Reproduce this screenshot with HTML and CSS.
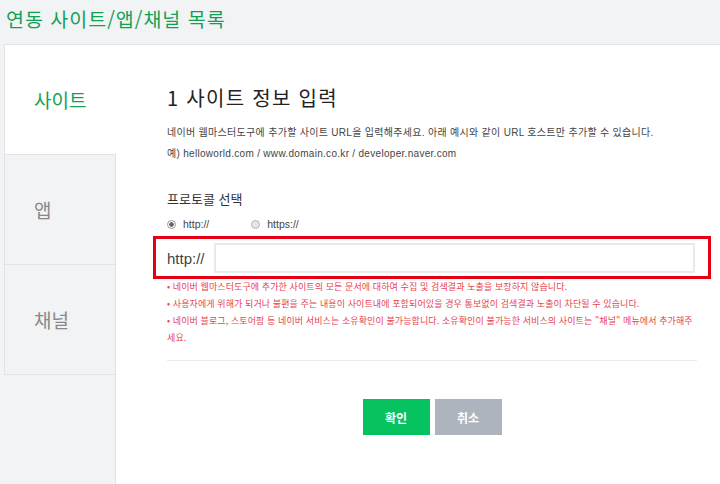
FILE: index.html
```html
<!DOCTYPE html>
<html lang="ko">
<head>
    <meta charset="UTF-8">
    <meta name="viewport" content="width=device-width, initial-scale=1.0">
    <title>연동 사이트/앱/채널 목록</title>
    <link rel="stylesheet" href="styles.css">
</head>
<body>

<h1 class="page-title">연동 사이트/앱/채널 목록</h1>

<div class="panel">
    <!-- 왼쪽 탭 -->
    <ul class="tabs">
        <li class="tab active">사이트</li>
        <li class="tab">앱</li>
        <li class="tab last">채널</li>
        <li class="tab-fill"></li>
    </ul>

    <div class="content">
        <h2>1 사이트 정보 입력</h2>
        <p class="desc">
            네이버 웹마스터도구에 추가할 사이트 URL을 입력해주세요. 아래 예시와 같이 URL 호스트만 추가할 수 있습니다.<br>
            예) helloworld.com / www.domain.co.kr / developer.naver.com
        </p>

        <h3>프로토콜 선택</h3>
        <div class="radios">
            <label><input type="radio" name="protocol" value="http" checked> http://</label>
            <label><input type="radio" name="protocol" value="https"> https://</label>
        </div>

        <!-- 입력 영역 -->
        <div class="url-box">
            <span class="prefix">http://</span>
            <input type="text" id="url" class="url-input">
        </div>

        <ul class="notes">
            <li>• 네이버 웹마스터도구에 추가한 사이트의 모든 문서에 대하여 수집 및 검색결과 노출을 보장하지 않습니다.</li>
            <li>• 사용자에게 위해가 되거나 불편을 주는 내용이 사이트내에 포함되어있을 경우 통보없이 검색결과 노출이 차단될 수 있습니다.</li>
            <li>• 네이버 블로그, 스토어팜 등 네이버 서비스는 소유확인이 불가능합니다. 소유확인이 불가능한 서비스의 사이트는 "채널" 메뉴에서 추가해주세요.</li>
        </ul>

        <div class="buttons">
            <button type="button" class="btn ok">확인</button>
            <button type="button" class="btn cancel">취소</button>
        </div>
    </div>
</div>

</body>
</html>
```

FILE: styles.css
```css
body {
    font-family: 'Liberation Sans', 'Noto Sans CJK KR', sans-serif;
    background-color: #f2f3f5;
    color: #333;
    margin: 0;
    padding: 0;
    overflow: hidden;
}
.page-title {
    margin: 0;
    height: 44px;
    padding-left: 6px;
    line-height: 37px;
    font-family: 'Noto Sans CJK KR', sans-serif;
    font-size: 19.5px;
    font-weight: 400;
    letter-spacing: 1px;
    color: #11a153;
}
.panel {
    display: flex;
    margin-left: 4px;
    border-top: 1px solid #e1e3e6;
    height: 440px;
}
.tabs {
    list-style: none;
    margin: 0;
    padding: 0;
    width: 112px;
    display: flex;
    flex-direction: column;
}
.tab {
    height: 109px;
    padding-left: 29px;
    display: flex;
    align-items: center;
    font-family: 'Noto Sans CJK KR', sans-serif;
    font-size: 19px;
    color: #888;
    background-color: #f2f3f5;
    border-left: 1px solid #e1e3e6;
    border-right: 1px solid #e1e3e6;
    border-top: 1px solid #e1e3e6;
}
.tab.active {
    color: #11a153;
    background-color: #fff;
    border-top: none;
    border-right: none;
    height: 109px;
}
.tab.last {
    border-bottom: 1px solid #e1e3e6;
}
.tab-fill {
    flex: 1;
    border-right: 1px solid #e1e3e6;
}
.content {
    flex: 1;
    background-color: #fff;
    padding: 39px 23px 0 51px;
}
h2 {
    margin: 0;
    font-family: 'Noto Sans CJK KR', sans-serif;
    font-size: 20px;
    font-weight: 400;
    line-height: 28px;
    letter-spacing: 1.3px;
    color: #222;
}
.desc {
    margin: 10px 0 0;
    font-size: 10px;
    line-height: 21px;
    letter-spacing: 0.3px;
    color: #444;
}
h3 {
    margin: 25px 0 0;
    font-family: 'Noto Sans CJK KR', sans-serif;
    font-size: 13px;
    font-weight: 400;
    line-height: 20px;
    color: #333;
}
.radios {
    margin-top: 7px;
    display: flex;
    font-size: 10.5px;
    line-height: 16px;
    color: #444;
}
.radios label {
    display: flex;
    align-items: center;
    margin-right: 42px;
}
.radios input {
    appearance: none;
    width: 9px;
    height: 9px;
    margin: 0 7px 0 0;
    border: 1px solid #b5b5b5;
    border-radius: 50%;
    background-color: #e6e6e6;
}
.radios input:checked {
    background: radial-gradient(circle, #666 0, #666 2px, #fff 2.5px);
    border-color: #999;
}
.url-box {
    display: flex;
    align-items: center;
    margin: 4px -14px 0;
    padding: 4px 13px 3px 11px;
    border: 3px solid #e60012;
}
.prefix {
    width: 47px;
    font-size: 15px;
    color: #444;
}
.url-input {
    flex: 1;
    height: 30px;
    box-sizing: border-box;
    border: 2px solid #e9eaec;
    padding: 0 8px;
    font-size: 13px;
    outline: none;
}
.notes {
    list-style: none;
    margin: -1px 0 0;
    padding: 0 0 14px;
    font-family: 'Noto Sans CJK KR', sans-serif;
    font-size: 9px;
    line-height: 17px;
    letter-spacing: 0.1px;
    color: #e8434f;
    border-bottom: 1px solid #ebebeb;
}
.buttons {
    display: flex;
    justify-content: center;
    gap: 5px;
    margin-top: 38px;
}
.btn {
    width: 67px;
    height: 36px;
    border: none;
    font-family: 'Noto Sans CJK KR', sans-serif;
    font-size: 12px;
    font-weight: bold;
    color: #fff;
    cursor: pointer;
}
.btn.ok {
    background-color: #06c25f;
}
.btn.cancel {
    background-color: #adb4bd;
}
```
